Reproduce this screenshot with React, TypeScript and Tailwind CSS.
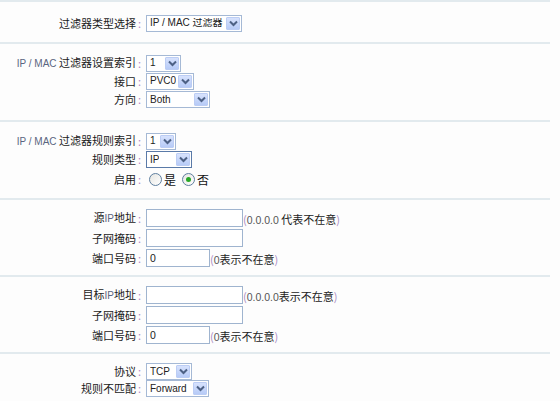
import type { ReactNode } from "react";

const latin = "font-['Liberation_Sans','Noto_Sans_CJK_SC',sans-serif]";

function Chevron() {
  return (
    <svg width="9" height="7" viewBox="0 0 9 7" className="block">
      <path d="M1 1.5 L4.5 5 L8 1.5" fill="none" stroke="#4d6185" strokeWidth="2" />
    </svg>
  );
}

function Select({ value, w, focus }: { value: ReactNode; w: string; focus?: boolean }) {
  return (
    <div
      className={`flex h-[17px] items-center justify-between gap-[1px] overflow-hidden border bg-white pl-[3px] pr-[1px] ${w} ${
        focus ? "border-[#5a7aa8]" : "border-[#a5b9d5]"
      }`}
    >
      <span className={`${latin} min-w-0 overflow-hidden whitespace-nowrap text-[10px] leading-none text-[#222]`}>
        {value}
      </span>
      <span className="flex h-[13px] w-[14px] shrink-0 items-center justify-center rounded-[1px] border border-[#bccdf4] bg-gradient-to-b from-[#d7e2fd] to-[#b7cbf7]">
        <Chevron />
      </span>
    </div>
  );
}

function Input({ w, value }: { w: string; value?: string }) {
  return (
    <div className={`flex h-[18px] items-center border border-[#9fb4cf] bg-white pl-[3px] ${w}`}>
      <span className={`${latin} text-[10.5px] leading-none text-[#222]`}>{value}</span>
    </div>
  );
}

function Radio({ checked, label }: { checked?: boolean; label: string }) {
  return (
    <span className="flex items-center gap-[2px]">
      <span className="flex h-[13px] w-[13px] items-center justify-center rounded-full border border-[#5f7f9f] bg-gradient-to-br from-[#e6e6e2] to-white">
        {checked && <span className="h-[5px] w-[5px] rounded-full bg-[#27a827]" />}
      </span>
      <span className="text-[12px] text-[#111]">{label}</span>
    </span>
  );
}

function Small({ children }: { children: ReactNode }) {
  return <span className={`${latin} text-[10px] text-[#5a6580]`}>{children}</span>;
}

function Row({ label, h, children }: { label: ReactNode; h: string; children: ReactNode }) {
  return (
    <div className={`flex items-center ${h}`}>
      <div className="w-[136px] whitespace-nowrap text-right text-[11px] leading-none text-[#1a1a1a]">{label}</div>
      <div className="w-[10px] pl-[2px] text-[11px] leading-none text-[#b48ac8]">:</div>
      {children}
    </div>
  );
}

function Hint({ children }: { children: ReactNode }) {
  return (
    <span className="self-end whitespace-nowrap pb-[1px] text-[11px] leading-[14px] text-[#222]">
      <span className="text-[#a98cc4]">(</span>
      {children}
      <span className="text-[#a98cc4]">)</span>
    </span>
  );
}

function Line() {
  return <div className="h-[2px] w-[550px] bg-[#e2eaee]" />;
}

export default function App() {
  return (
    <div className="h-[401px] w-[560px] overflow-hidden bg-[#fdfdfd] font-['Noto_Sans_CJK_SC','Liberation_Sans',sans-serif]">
      <Line />
      <div className="pb-[9px] pt-[11px]">
        <Row label="过滤器类型选择" h="h-[20px]">
          <Select w="w-[96px]" value={<>IP / MAC 过滤器</>} />
        </Row>
      </div>
      <Line />
      <div className="pb-[11px] pt-[10px]">
        <Row label={<><Small>IP / MAC</Small> 过滤器设置索引</>} h="h-[18px]">
          <Select w="w-[35px]" value="1" />
        </Row>
        <Row label="接口" h="h-[18px]">
          <Select w="w-[48px]" value="PVC0" />
        </Row>
        <Row label="方向" h="h-[19px]">
          <Select w="w-[64px]" value="Both" />
        </Row>
      </div>
      <Line />
      <div className="pb-[8px] pt-[10px]">
        <Row label={<><Small>IP / MAC</Small> 过滤器规则索引</>} h="h-[18px]">
          <Select w="w-[30px]" value="1" />
        </Row>
        <Row label="规则类型" h="h-[19px]">
          <Select w="w-[46px]" value="IP" focus />
        </Row>
        <Row label="启用" h="h-[21px]">
          <div className="flex items-center gap-[6px] pl-[3px]">
            <Radio label="是" />
            <Radio label="否" checked />
          </div>
        </Row>
      </div>
      <Line />
      <div className="pb-[7px] pt-[8px]">
        <Row label={<>源<Small>IP</Small>地址</>} h="h-[20px]">
          <Input w="w-[97px]" />
          <Hint>
            <span className={`${latin} text-[10.5px] text-[#555]`}>0.0.0.0</span> 代表不在意
          </Hint>
        </Row>
        <Row label="子网掩码" h="h-[20px]">
          <Input w="w-[97px]" />
        </Row>
        <Row label="端口号码" h="h-[20px]">
          <Input w="w-[64px]" value="0" />
          <Hint>
            <span className={`${latin} text-[10.5px] text-[#555]`}>0</span>表示不在意
          </Hint>
        </Row>
      </div>
      <Line />
      <div className="pb-[7px] pt-[8px]">
        <Row label={<>目标<Small>IP</Small>地址</>} h="h-[20px]">
          <Input w="w-[97px]" />
          <Hint>
            <span className={`${latin} text-[10.5px] text-[#555]`}>0.0.0.0</span>表示不在意
          </Hint>
        </Row>
        <Row label="子网掩码" h="h-[20px]">
          <Input w="w-[97px]" />
        </Row>
        <Row label="端口号码" h="h-[20px]">
          <Input w="w-[64px]" value="0" />
          <Hint>
            <span className={`${latin} text-[10.5px] text-[#555]`}>0</span>表示不在意
          </Hint>
        </Row>
      </div>
      <Line />
      <div className="pt-[9px]">
        <Row label="协议" h="h-[17px]">
          <Select w="w-[46px]" value="TCP" />
        </Row>
        <Row label="规则不匹配" h="h-[17px]">
          <Select w="w-[63px]" value="Forward" />
        </Row>
      </div>
    </div>
  );
}
